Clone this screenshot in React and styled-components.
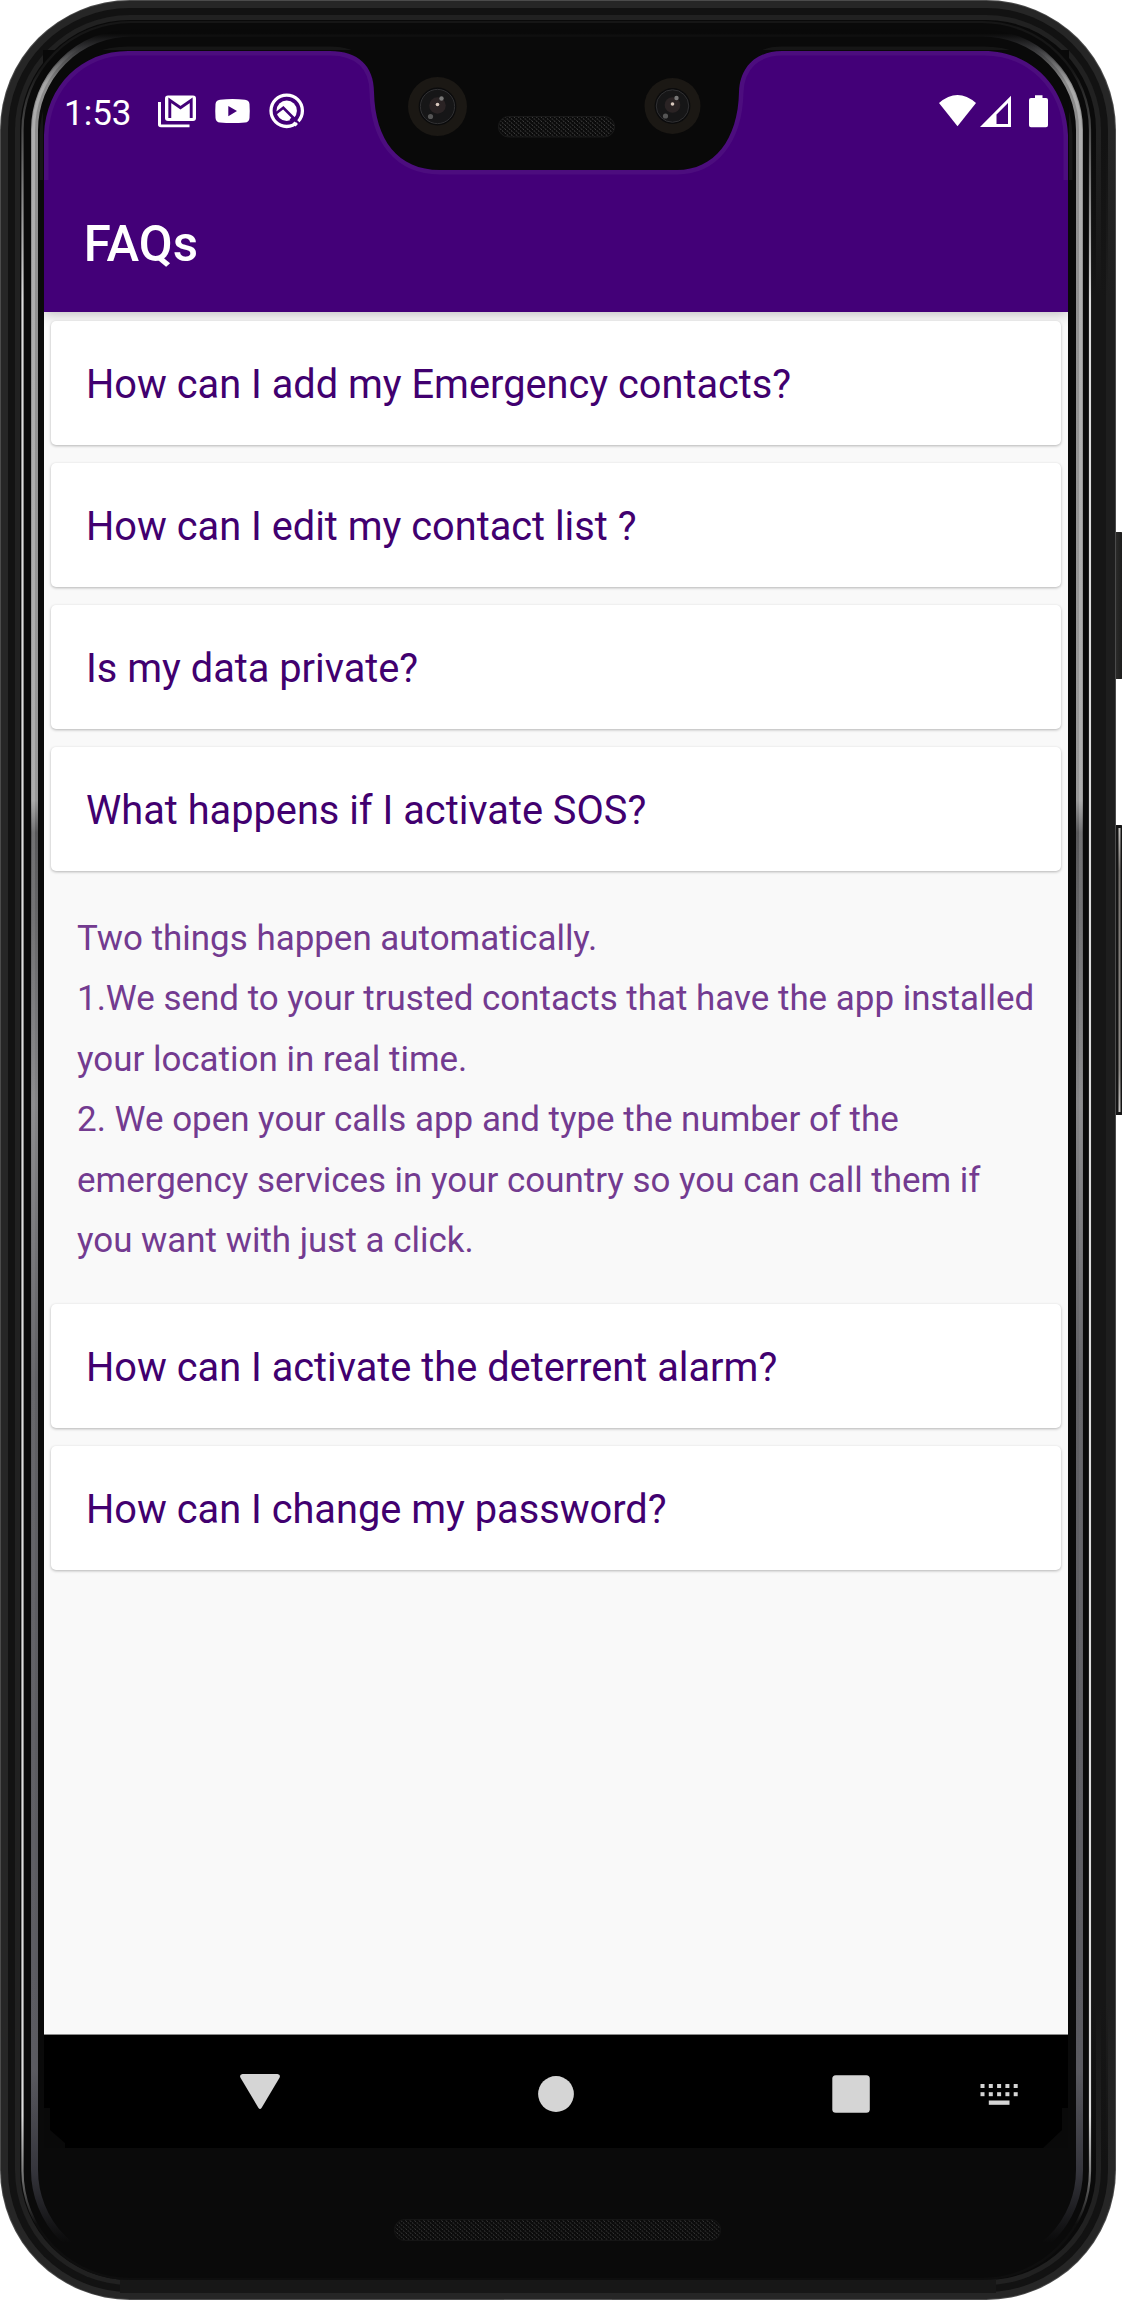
import React from "react";
import styled, { createGlobalStyle } from "styled-components";

const Global = createGlobalStyle`
  * { box-sizing: border-box; }
  body { margin: 0; background: #fff; font-family: Roboto, sans-serif; }
`;

const Device = styled.div`
  position: relative;
  width: 1122px;
  height: 2300px;
  padding: 51px 54px 0 44px;
  overflow: hidden;
`;

const Layer = styled.svg`
  position: absolute;
  left: 0;
  top: 0;
  pointer-events: none;
`;

const Screen = styled.main`
  position: relative;
  display: flex;
  flex-direction: column;
  width: 1024px;
  height: 2097px;
  overflow: hidden;
  background: #f9f9f9;
`;

const Header = styled.header`
  display: flex;
  flex-direction: column;
  height: 261px;
  flex: none;
  background: #430078;
  color: #fff;
  box-shadow: 0 2px 12px rgba(0, 0, 0, 0.24);
`;

const StatusBar = styled.div`
  display: flex;
  align-items: center;
  height: 120px;
  padding: 0 20px;
`;

const Clock = styled.span`
  width: 94px;
  padding-top: 5px;
  font-size: 35px;
  line-height: 40px;
`;

const StatusIcons = styled.div`
  display: flex;
  align-items: center;
  gap: ${(p) => p.$gap}px;
`;

const BatterySlot = styled.div`
  margin-left: 18px;
`;

const Glyph = styled.svg`
  display: block;
  flex: none;
  fill: ${(p) => p.$fill || "#fff"};
`;

const Spacer = styled.div`
  flex: 1;
`;

const Title = styled.h1`
  margin: 0;
  padding: 43px 0 0 39.7px;
  font-size: 49.2px;
  font-weight: 500;
  line-height: 60px;
`;

const List = styled.section`
  display: flex;
  flex-direction: column;
  flex: 1;
  gap: 18px;
  padding: 9px 7px 0;
`;

const Question = styled.div`
  flex: none;
  height: 124px;
  padding-left: 35px;
  border-radius: 5px;
  background: #fff;
  box-shadow: 0 1px 3px rgba(0, 0, 0, 0.28);
  color: #41006f;
  font-size: 39.75px;
  line-height: 128px;
  white-space: nowrap;
`;

const Answer = styled.p`
  margin: 0;
  padding: 20px 0 0 26px;
  height: 397px;
  color: #733b90;
  font-size: 34.93px;
  line-height: 60.4px;
  white-space: pre;
`;

const NavBar = styled.nav`
  display: flex;
  align-items: center;
  justify-content: space-between;
  height: 114px;
  flex: none;
  padding: 5px 50px 0 196px;
  border-top: 1px solid #8a8a8a;
  background: #000;
`;

const NavKeys = styled.div`
  display: flex;
  align-items: center;
  gap: 258px;
`;

const faqs = [
  { q: "How can I add my Emergency contacts?" },
  { q: "How can I edit my contact list ?" },
  { q: "Is my data private?" },
  {
    q: "What happens if I activate SOS?",
    a: [
      "Two things happen automatically.",
      "1.We send to your trusted contacts that have the app installed",
      "your location in real time.",
      "2. We open your calls app and type the number of the",
      "emergency services in your country so you can call them if",
      "you want with just a click.",
    ].join("\n"),
  },
  { q: "How can I activate the deterrent alarm?" },
  { q: "How can I change my password?" },
];

function Body() {
  const ring = (i, r, fill) => (
    <rect x={i} y={i} width={1116 - 2 * i} height={2300 - 2 * i} rx={r} fill={fill} />
  );
  const band = (color) => (
    <linearGradient id={`band${color}`} x1="0" x2="0" y1="0" y2="1">
      <stop offset="0" stopColor={`#${color}`} stopOpacity="0" />
      <stop offset="0.08" stopColor={`#${color}`} />
      <stop offset="0.92" stopColor={`#${color}`} />
      <stop offset="1" stopColor={`#${color}`} stopOpacity="0" />
    </linearGradient>
  );
  return (
    <Layer width="1122" height="2300" viewBox="0 0 1122 2300">
      <defs>
        <linearGradient id="key" x1="0" x2="1">
          <stop offset="0" stopColor="#0a0a0a" />
          <stop offset="0.35" stopColor="#2a2a29" />
          <stop offset="1" stopColor="#1a1a19" />
        </linearGradient>
        <linearGradient id="keyLight" x1="0" x2="0" y1="0" y2="1">
          <stop offset="0" stopColor="#c5c3c0" />
          <stop offset="0.15" stopColor="#77736f" />
          <stop offset="0.85" stopColor="#8d8a86" />
          <stop offset="1" stopColor="#c5c3c0" />
        </linearGradient>
        {band("161616")}
        {band("1e1e1e")}
      </defs>
      <rect x="1113" y="532" width="10" height="147" rx="2" fill="url(#key)" />
      <rect x="1113" y="825" width="10" height="290" rx="2" fill="#151515" />
      <rect x="1118.500" y="828" width="2" height="284" fill="url(#keyLight)" />
      {ring(0, 130, "#4b4b4b")}
      {ring(1, 129, "#262626")}
      {ring(8, 122, "#121212")}
      {ring(15, 115, "#212121")}
      {ring(20, 110, "#0a0a0a")}
      <rect x="1092" y="135" width="14" height="2030" fill="url(#band161616)" />
      <rect x="1106" y="135" width="9" height="2030" fill="url(#band1e1e1e)" />
      <path d="M120 2286H996" stroke="#171717" strokeWidth="14" />
    </Layer>
  );
}

function Rails() {
  return (
    <Layer width="1122" height="2300" viewBox="0 0 1122 2300" fill="none">
      <defs>
        <linearGradient id="glint" x1="0" x2="0" y1="0" y2="2300" gradientUnits="userSpaceOnUse">
          <stop offset="0.0145" stopColor="#090909" />
          <stop offset="0.02" stopColor="#2c2c2e" />
          <stop offset="0.036" stopColor="#8a8a8a" />
          <stop offset="0.06" stopColor="#8f8f8f" />
          <stop offset="0.348" stopColor="#999" />
          <stop offset="0.362" stopColor="#58585a" />
          <stop offset="0.48" stopColor="#858587" />
          <stop offset="0.6" stopColor="#606064" />
          <stop offset="0.9" stopColor="#5a5a60" />
          <stop offset="0.945" stopColor="#34343b" />
          <stop offset="0.975" stopColor="#0a0a0a" />
        </linearGradient>
        <linearGradient id="core" x1="0" x2="0" y1="0" y2="2300" gradientUnits="userSpaceOnUse">
          <stop offset="0.02" stopColor="#fff" stopOpacity="0" />
          <stop offset="0.04" stopColor="#fff" stopOpacity="0.28" />
          <stop offset="0.34" stopColor="#fff" stopOpacity="0.2" />
          <stop offset="0.4" stopColor="#fff" stopOpacity="0.08" />
          <stop offset="0.94" stopColor="#fff" stopOpacity="0" />
        </linearGradient>
        <linearGradient id="edge" x1="0" x2="0" y1="0" y2="2300" gradientUnits="userSpaceOnUse">
          <stop offset="0.03" stopColor="#161616" />
          <stop offset="0.07" stopColor="#666" />
          <stop offset="0.13" stopColor="#dcdcdc" />
          <stop offset="0.92" stopColor="#dcdcdc" />
          <stop offset="0.945" stopColor="#777" />
          <stop offset="0.967" stopColor="#0e0e0e" />
        </linearGradient>
      </defs>
      <rect x="22.500" y="22" width="1067.500" height="2257" rx="108" stroke="url(#edge)" strokeWidth="2.2" />
      <rect x="34.500" y="33" width="1045" height="2234" rx="97" stroke="url(#glint)" strokeWidth="7" />
      <rect x="33.500" y="32" width="1047" height="2236" rx="98" stroke="url(#core)" strokeWidth="3" />
    </Layer>
  );
}

const lens = (cx, cy, r) => (
  <g key={cx}>
    <circle cx={cx} cy={cy} r={r} fill="#1b1814" />
    <circle cx={cx} cy={cy} r={r * 0.64} fill="#0b0b0c" />
    <circle cx={cx} cy={cy} r={r * 0.58} fill="#161617" stroke="#303032" />
    <circle cx={cx} cy={cy - 1} r={r * 0.28} fill="#2a2324" />
    <circle cx={cx} cy={cy - 2} r="1.800" fill="#d8c8bd" />
    <circle cx={cx + 4} cy={cy - 8} r="2.200" fill="#777" />
    <circle cx={cx - 7} cy={cy + 10} r="2.600" fill="#555" />
  </g>
);

function Cutout() {
  const opening =
    "M44 180V135C46 85 82 51 128 51H330C358 51 374 66 374 92C375 140 398 170 440 170H677C714 170 738 140 739 92C740 66 757 51 782 51H984C1030 51 1066 85 1068 135V180";
  return (
    <Layer width="1122" height="2300" viewBox="0 0 1122 2300">
      <defs>
        <pattern id="mesh" width="4.5" height="4" patternUnits="userSpaceOnUse">
          <rect width="4.5" height="4" fill="#0b0b0b" />
          <path d="M.5 .5l1.300 1.300M2.700 2.500l1.300 1.300" stroke="#555" strokeWidth="0.9" />
        </pattern>
        <pattern id="meshDim" width="4.5" height="4" patternUnits="userSpaceOnUse">
          <rect width="4.5" height="4" fill="#0b0b0b" />
          <path d="M.5 .5l1.300 1.300M2.700 2.500l1.300 1.300" stroke="#484848" strokeWidth="0.9" />
        </pattern>
      </defs>
      <path d={opening} fill="none" stroke="#fff" strokeOpacity="0.05" strokeWidth="9" />
      <path d={`${opening}H1069V50H43V180Z`} fill="#090909" />
      <path d="M44 2108H50V2130L65 2143V2148H44ZM1068 2108H1062V2130L1043 2148H1068Z" fill="#090909" />
      {lens(437.5, 106.5, 29.5)}
      {lens(672.5, 106, 28)}
      <rect x="498.5" y="116.500" width="116" height="20.500" rx="10" fill="url(#mesh)" stroke="#1a1a1a" />
      <rect x="394.500" y="2219.500" width="326" height="21" rx="10" fill="url(#meshDim)" stroke="#151515" />
      <path d="M504 2299.500H612" stroke="#555" />
    </Layer>
  );
}

function MailIcon() {
  return (
    <Glyph width="38" height="36" viewBox="0 0 38 36">
      <rect x="7" y="2.500" width="31" height="25.500" rx="3" />
      <path d="M11.800 25V7.200L22.500 14.800L33.200 7.200V25" fill="none" stroke="#430078" strokeWidth="2.900" />
      <path d="M0 9H3V31.500H31.500V34.300H3Q0 34.300 0 31.500Z" />
    </Glyph>
  );
}

function VideoIcon() {
  return (
    <Glyph width="35" height="36" viewBox="0 0 35 36">
      <path fillRule="evenodd" d="M5 6.700Q17.500 5.500 30 6.700Q34 7 34.500 11Q35 18 34.500 25Q34 29.300 30 29.500Q17.500 30.700 5 29.500Q1 29.300 .5 25Q0 18 .5 11Q1 7 5 6.700ZM13.300 13V23.300L22 18.100Z" />
    </Glyph>
  );
}

function QuickIcon() {
  return (
    <Glyph width="36" height="36" viewBox="0 0 36 36">
      <circle cx="17.700" cy="17.800" r="15.700" fill="none" stroke="#fff" strokeWidth="3.300" />
      <circle cx="17.700" cy="17.800" r="10.200" />
      <path d="M5.500 21.500L14.300 14.800L26.500 27" fill="none" stroke="#430078" strokeWidth="2.600" />
      <path d="M22 25L26.500 29.500" stroke="#430078" strokeWidth="4" />
      <path d="M24 24.500L33 33.500" stroke="#430078" strokeWidth="2.300" />
      <path d="M24.500 29.500L27.500 32.500" stroke="#fff" strokeWidth="2.800" />
    </Glyph>
  );
}

function WifiIcon() {
  return (
    <Glyph width="37" height="36" viewBox="0 0 37 36">
      <path d="M0 10Q18.500 -6 37 10L18.500 33.300Z" />
    </Glyph>
  );
}

function SignalIcon() {
  return (
    <Glyph width="31" height="36" viewBox="0 0 31 36">
      <path fillRule="evenodd" d="M31 2.700V34H0ZM28 10L16.500 21.500V31H28Z" />
    </Glyph>
  );
}

function BatteryIcon() {
  return (
    <Glyph width="19" height="36" viewBox="0 0 19 36">
      <path d="M6 2.300H13.500V5H17Q19 5 19 7V32.300Q19 34.300 17 34.300H2Q0 34.300 0 32.300V7Q0 5 2 5H6Z" />
    </Glyph>
  );
}

const keyFill = "#d5d5d5";

function BackKey() {
  return (
    <Glyph $fill={keyFill} width="40" height="40" viewBox="0 0 40 40">
      <path d="M2.500 0H37.500Q41 .5 39.500 3.800L21.500 34Q20 36 18.500 34L.5 3.800Q-1 .5 2.500 0Z" />
    </Glyph>
  );
}

function HomeKey() {
  return (
    <Glyph $fill={keyFill} width="36" height="36" viewBox="0 0 36 36">
      <circle cx="18" cy="18" r="17.900" />
    </Glyph>
  );
}

function RecentKey() {
  return (
    <Glyph $fill={keyFill} width="38" height="38" viewBox="0 0 38 38">
      <rect x=".3" y=".3" width="37.500" height="37.500" rx="3.500" />
    </Glyph>
  );
}

function KeyboardKey() {
  const cols = [0.5, 8.8, 17.1, 25.4, 33.7];
  return (
    <Glyph $fill={keyFill} width="38" height="22" viewBox="0 0 38 22">
      {cols.map((x) => (
        <React.Fragment key={x}>
          <rect x={x} y="1" width="4" height="4" />
          <rect x={x} y="9.200" width="4" height="4" />
        </React.Fragment>
      ))}
      <rect x="8.800" y="17.500" width="20.700" height="4.300" />
    </Glyph>
  );
}

export default function App() {
  return (
    <>
      <Global />
      <Device>
        <Body />
        <Screen>
          <Header>
            <StatusBar>
              <Clock>1:53</Clock>
              <StatusIcons $gap={19}>
                <MailIcon />
                <VideoIcon />
                <QuickIcon />
              </StatusIcons>
              <Spacer />
              <StatusIcons $gap={4}>
                <WifiIcon />
                <SignalIcon />
              </StatusIcons>
              <BatterySlot>
                <BatteryIcon />
              </BatterySlot>
            </StatusBar>
            <Title>FAQs</Title>
          </Header>
          <List>
            {faqs.map((f) => (
              <React.Fragment key={f.q}>
                <Question>{f.q}</Question>
                {f.a && <Answer>{f.a}</Answer>}
              </React.Fragment>
            ))}
          </List>
          <NavBar>
            <NavKeys>
              <BackKey />
              <HomeKey />
              <RecentKey />
            </NavKeys>
            <KeyboardKey />
          </NavBar>
        </Screen>
        <Cutout />
        <Rails />
      </Device>
    </>
  );
}
